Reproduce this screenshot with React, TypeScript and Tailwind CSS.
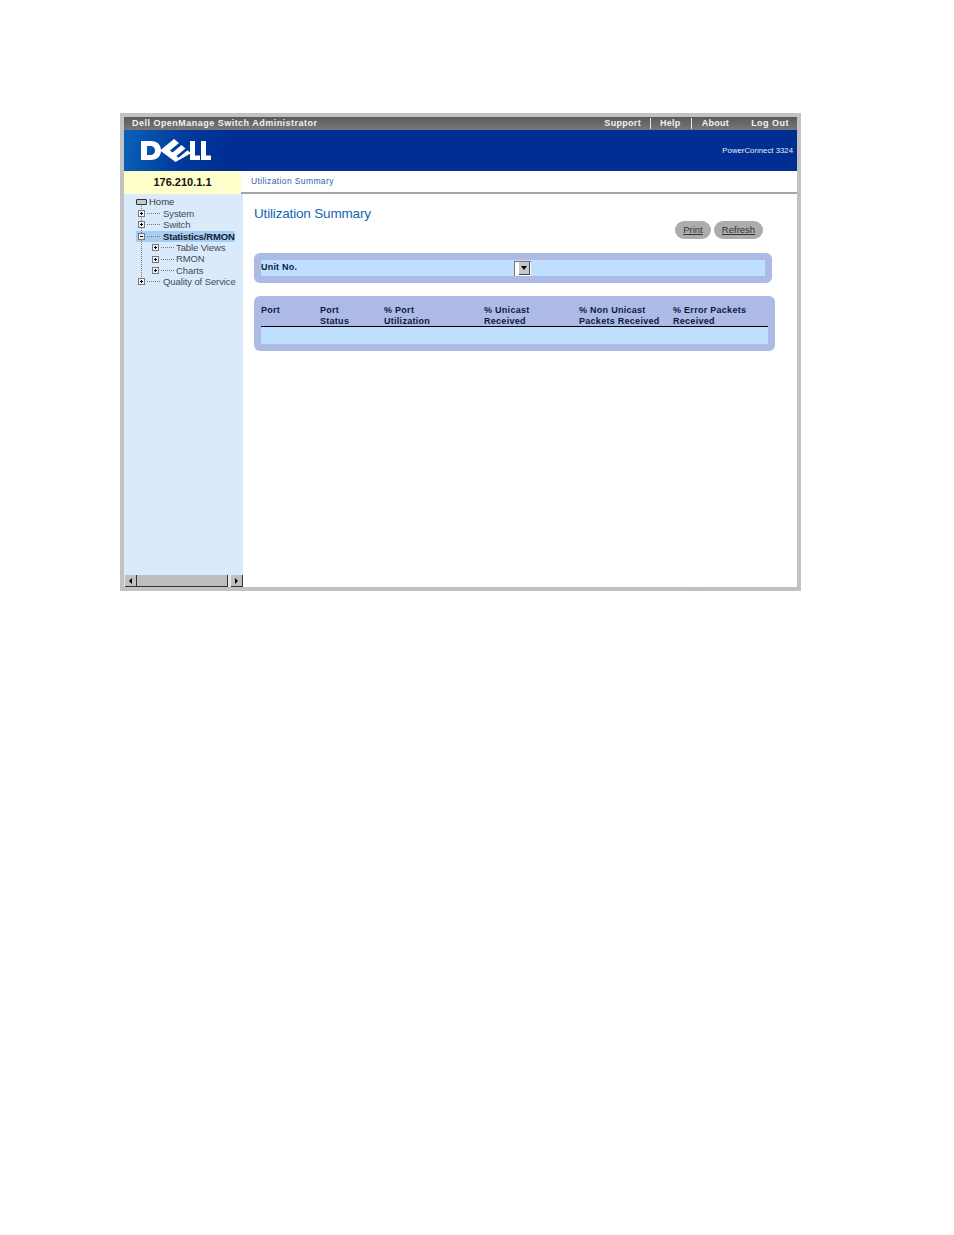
import React from "react";

const sans = "font-['Liberation_Sans',Arial,sans-serif]";

const DellLogo = () => (
  <svg width="72" height="23" viewBox="0 0 72 23" className="block">
    <path
      fill="#fff"
      fillRule="evenodd"
      d="M1 2h10c6 0 10 3.600 10 9.500s-4 9.500-10 9.500H1z M7 7v9h3.500c2.600 0 4.500-1.700 4.500-4.500S13.100 7 10.500 7z"
    />
    <polygon
      fill="#fff"
      points="20,11.500 34,0 39,4 30,11.500 32.500,13.500 41.500,6 45.500,9.500 36.500,17 38.500,18.700 47.500,11.200 51,14.200 35.500,23"
    />
    <path fill="#fff" d="M50 2h5v14.500h5V21H50zM61 2h5v14.500h5V21H61z" />
  </svg>
);

const Box = ({ open = false }: { open?: boolean }) => (
  <span className="relative block h-[7px] w-[7px] shrink-0 border border-[#777] bg-[#eef4fb]">
    <span className="absolute left-[1px] top-[2px] h-[1px] w-[3px] bg-black" />
    {!open && <span className="absolute left-[2px] top-[1px] h-[3px] w-[1px] bg-black" />}
  </span>
);

const TreeRow = ({
  label,
  level = 0,
  open = false,
  active = false,
}: {
  label: string;
  level?: number;
  open?: boolean;
  active?: boolean;
}) => (
  <div className={`flex h-[11.4px] items-center ${level === 1 ? "pl-[28px]" : "pl-[14px]"}`}>
    <div className={`flex h-full items-center ${active ? "w-[99px] bg-[#a8cdf2] -ml-[2px] pl-[2px]" : ""}`}>
      <Box open={open} />
      <span className="ml-[2px] w-[13px] shrink-0 border-t border-dotted border-[#777]" />
      <span
        className={`whitespace-nowrap text-[9.500px] leading-none ${level === 1 ? "ml-[2px]" : "ml-[3px]"} ${
          active ? "font-bold tracking-[-0.15px] text-[#0b1c33]" : "tracking-[-0.1px] text-[#3d4a5c]"
        }`}
      >
        {label}
      </span>
    </div>
  </div>
);

const Cell = ({ children }: { children: React.ReactNode }) => (
  <div className="pt-[0.500px] text-[9px] font-bold leading-[11px] tracking-[0.28px] text-[#0c1a3a]">{children}</div>
);

export default function App() {
  return (
    <div className={`min-h-[1235px] bg-white pl-[120px] pt-[113px] ${sans}`}>
      <div className="relative flex h-[478px] w-[681px] flex-col border-[4px] border-[#c2c2c2] bg-white">
        <span className="absolute left-[568px] top-[472px] h-[1px] w-[10px] bg-[#b4b4d8]" />

        {/* top menu bar */}
        <div className="flex h-[13px] shrink-0 items-center justify-between bg-gradient-to-b from-[#5a5a5a] to-[#787878] pl-[8px] pr-[8px] text-[9px] font-bold tracking-[0.48px] text-[#f2f2f2]">
          <span>Dell OpenManage Switch Administrator</span>
          <div className="flex items-center tracking-[0.3px]">
            <span>Support</span>
            <span className="mx-[9px] h-[11px] w-[1px] bg-[#e8e8e8]" />
            <span>Help</span>
            <span className="mx-[10px] h-[11px] w-[1px] bg-[#e8e8e8]" />
            <span>About</span>
            <span className="ml-[22px] tracking-[0.48px]">Log Out</span>
          </div>
        </div>

        {/* banner */}
        <div className="flex h-[41px] shrink-0 items-center justify-between bg-[#002e93] bg-[linear-gradient(100deg,#0a62b8_0%,#003a9c_9%,#002e93_16%)] pl-[16px] pr-[4px]">
          <DellLogo />
          <span className="text-[7.800px] text-[#e6ecf8]">PowerConnect 3324</span>
        </div>

        {/* ip + breadcrumb */}
        <div className="flex h-[23px] shrink-0">
          <div className="flex w-[117px] items-center justify-center bg-[#ffffcc] text-[11px] font-bold text-[#111]">
            176.210.1.1
          </div>
          <div className="flex flex-1 items-center border-b-2 border-[#a6a6a6] pl-[10px] text-[8.500px] tracking-[0.38px] text-[#2a62a8]">
            Utilization Summary
          </div>
        </div>

        <div className="flex min-h-0 flex-1">
          {/* tree */}
          <div className="relative flex w-[119px] shrink-0 flex-col justify-between bg-[#dbeafa]">
            <span className="absolute left-[17px] top-[12px] h-[73px] border-l border-dotted border-[#777]" />
            <div className="pt-[2.500px]">
              <div className="flex h-[11.4px] items-center pl-[12px]">
                <span className="relative block h-[6px] w-[11px] rounded-[1px] border border-[#333] bg-[#c9c9c9]" />
                <span className="ml-[2px] text-[9.500px] leading-none text-[#2c3a4c]">Home</span>
              </div>
              <TreeRow label="System" />
              <TreeRow label="Switch" />
              <TreeRow label="Statistics/RMON" open active />
              <TreeRow label="Table Views" level={1} />
              <TreeRow label="RMON" level={1} />
              <TreeRow label="Charts" level={1} />
              <TreeRow label="Quality of Service" />
            </div>
            <div className="flex h-[12px] items-stretch bg-[#e4e4e4] pl-[1px]">
              <span className="flex w-[12px] items-center justify-center border-b border-r border-[#333] bg-[#c0c0c0]">
                <span className="h-0 w-0 border-y-[3px] border-r-[3px] border-y-transparent border-r-black" />
              </span>
              <span className="w-[91px] border-b border-r border-[#333] bg-[#bdbdbd]" />
              <span className="w-[3px]" />
              <span className="flex w-[12px] items-center justify-center border-b border-r border-[#333] bg-[#c0c0c0]">
                <span className="h-0 w-0 border-y-[3px] border-l-[3px] border-y-transparent border-l-black" />
              </span>
            </div>
          </div>

          {/* main */}
          <div className="flex-1 pl-[11px]">
            <div className="flex h-[59px] items-start justify-between pr-[34px]">
              <h1 className="pt-[11px] text-[13.500px] font-normal leading-[18px] tracking-[-0.17px] text-[#1464b0]">
                Utilization Summary
              </h1>
              <div className="flex gap-[3px] pt-[27px]">
                <span className="flex h-[18px] w-[36px] items-center justify-center rounded-full bg-[#acacac] text-[9.500px] text-[#333] underline">
                  Print
                </span>
                <span className="flex h-[18px] w-[49px] items-center justify-center rounded-full bg-[#acacac] text-[9.500px] text-[#333] underline">
                  Refresh
                </span>
              </div>
            </div>

            <div className="w-[518px] rounded-[6px] bg-[#adbae6] p-[7px]">
              <div className="flex h-[16px] items-center bg-[#bfdfff]">
                <span className="w-[253px] text-[9px] font-bold tracking-[0.2px] text-[#0c1a3a]">Unit No.</span>
                <span className="flex h-[15px] w-[17px] items-center justify-end border-l border-t border-[#777] bg-white pr-[1px]">
                  <span className="flex h-[13px] w-[11px] items-center justify-center border-b border-r border-[#444] bg-[#c8c8c8]">
                    <span className="h-0 w-0 border-x-[3px] border-t-[4px] border-x-transparent border-t-black" />
                  </span>
                </span>
              </div>
            </div>

            <div className="mt-[13px] w-[521px] rounded-[6px] bg-[#adbae6] px-[7px] pb-[7px] pt-[8px]">
              <div className="grid h-[23px] grid-cols-[59px_64px_100px_95px_94px_1fr] border-b border-black">
                <Cell>Port</Cell>
                <Cell>
                  Port
                  <br />
                  Status
                </Cell>
                <Cell>
                  % Port
                  <br />
                  Utilization
                </Cell>
                <Cell>
                  % Unicast
                  <br />
                  Received
                </Cell>
                <Cell>
                  % Non Unicast
                  <br />
                  Packets Received
                </Cell>
                <Cell>
                  % Error Packets
                  <br />
                  Received
                </Cell>
              </div>
              <div className="h-[17px] bg-[#bfdfff]" />
            </div>
          </div>
        </div>
      </div>
    </div>
  );
}
